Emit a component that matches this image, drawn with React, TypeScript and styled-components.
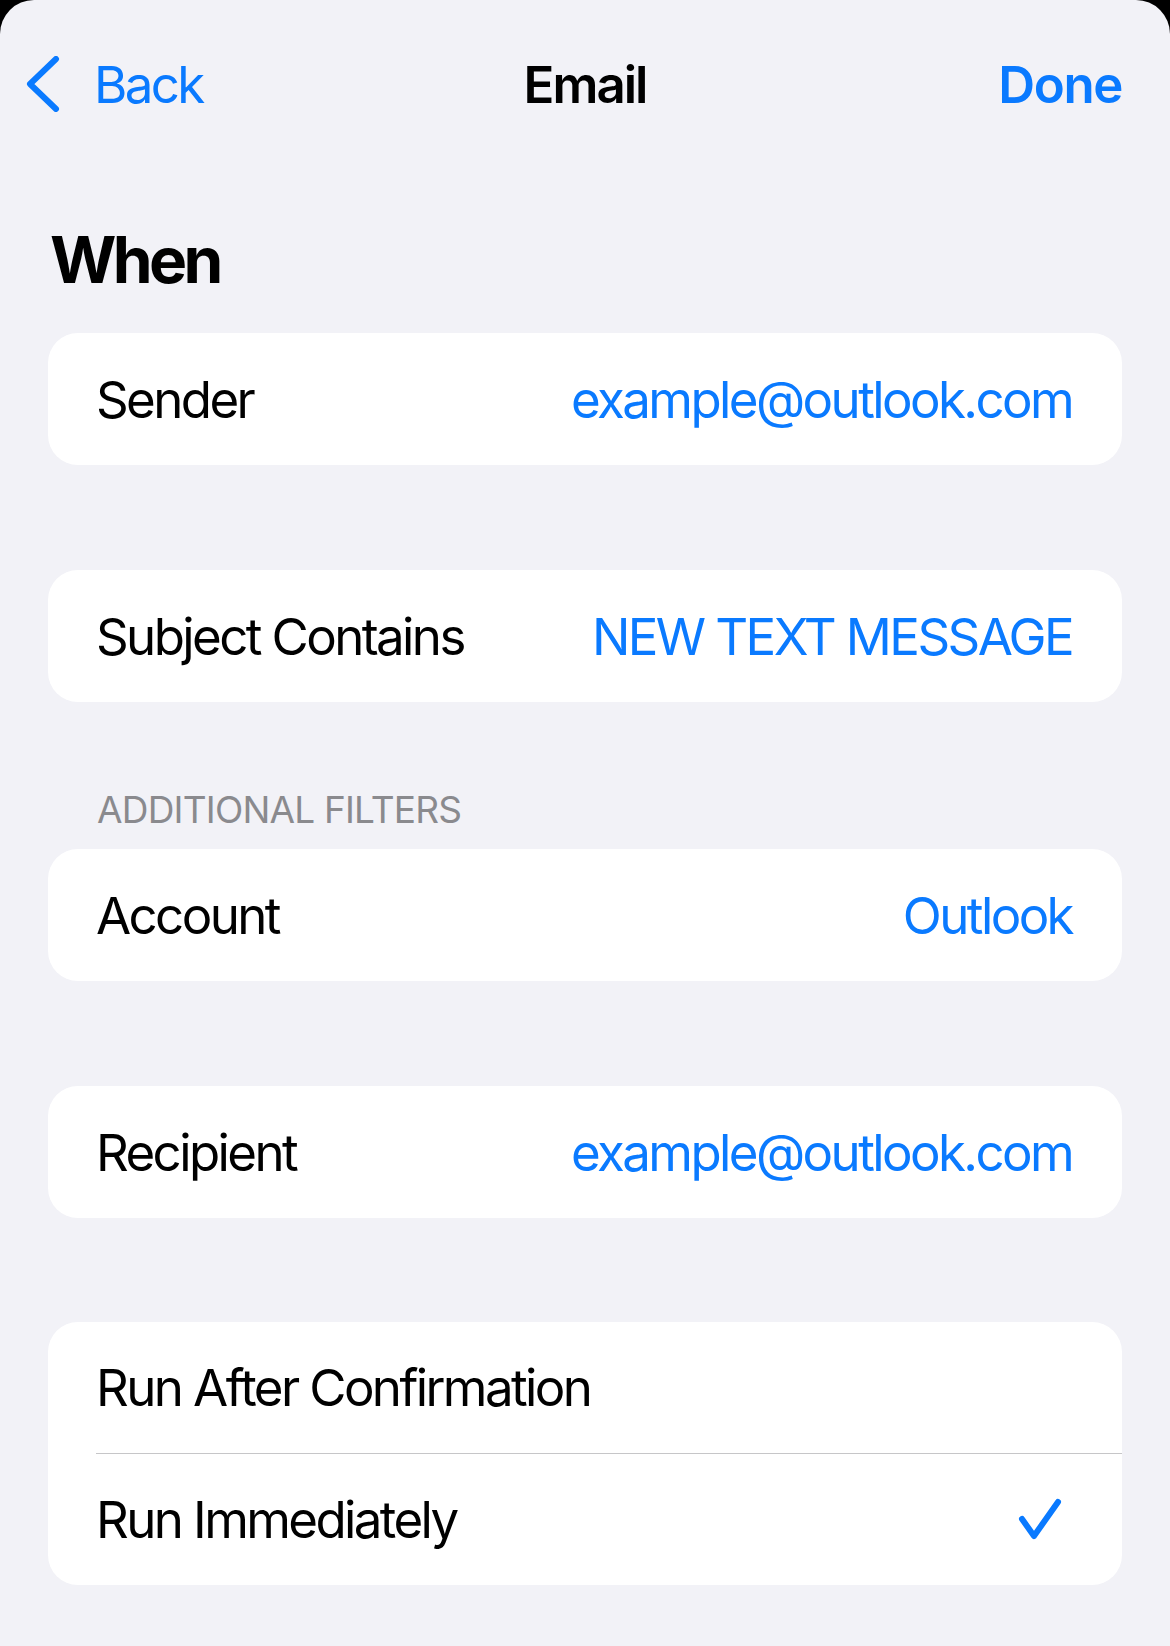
import React from "react";
import styled, { createGlobalStyle } from "styled-components";

const GlobalStyle = createGlobalStyle`
  html, body {
    margin: 0;
    padding: 0;
    background: #000;
  }
  body {
    font-family: Inter, "Noto Sans", "Liberation Sans", sans-serif;
    -webkit-font-smoothing: antialiased;
  }
`;

const Sheet = styled.div`
  min-height: 1646px;
  background-color: #f2f2f7;
  border-radius: 34px 34px 0 0;
  box-sizing: border-box;
  padding-bottom: 40px;
`;

const NavBar = styled.header`
  display: grid;
  grid-template-columns: 1fr auto 1fr;
  align-items: center;
  height: 88px;
  padding: 40px 48px 0 48px;
`;

const BackButton = styled.button`
  display: flex;
  align-items: center;
  gap: 34px;
  justify-self: start;
  margin-left: -22px;
  background: none;
  border: none;
  padding: 0;
  color: #0a7aff;
  font: inherit;
  font-size: 51px;
  letter-spacing: -2.6px;
`;

const NavTitle = styled.h2`
  margin: 0;
  font-size: 51px;
  font-weight: 600;
  letter-spacing: -2px;
  color: #000;
`;

const DoneButton = styled.button`
  justify-self: end;
  background: none;
  border: none;
  padding: 0;
  color: #0a7aff;
  font: inherit;
  font-size: 51px;
  font-weight: 600;
  letter-spacing: -1.4px;
`;

const Content = styled.main`
  padding: 0 48px;
`;

const LargeTitle = styled.h1`
  margin: 92px 0 0 2px;
  font-size: 64px;
  font-weight: 700;
  line-height: 80px;
  letter-spacing: -3.6px;
  color: #000;
`;

const SectionHeader = styled.div`
  margin: 86px 0 0 49px;
  height: 61px;
  font-size: 37px;
  line-height: 44px;
  color: #8a8a8e;
  letter-spacing: -0.8px;
`;

const Card = styled.section<{ $gap: number }>`
  margin-top: ${({ $gap }) => $gap}px;
  background-color: #fff;
  border-radius: 30px;
  overflow: hidden;
`;

const Row = styled.div<{ $height?: number }>`
  display: flex;
  align-items: center;
  justify-content: space-between;
  height: ${({ $height = 132 }) => $height}px;
  padding: 0 50px 0 48px;
  font-size: 51px;
  letter-spacing: -2.6px;
`;

const Label = styled.span`
  color: #000;
`;

const Value = styled.span`
  color: #0a7aff;
`;

const Divider = styled.hr`
  margin: 0 0 0 48px;
  border: none;
  height: 1px;
  background-color: #c6c6c8;
`;

const CheckIcon = styled.svg`
  margin-right: 8px;
`;

const Chevron = () => (
  <svg width="34" height="56" viewBox="0 0 34 56">
    <path d="M30 3 L4 28 L30 53" fill="none" stroke="#0a7aff" strokeWidth="6" strokeLinecap="round" strokeLinejoin="round" />
  </svg>
);

const Check = () => (
  <CheckIcon width="48" height="46" viewBox="0 0 48 46">
    <path d="M6 22 L18 39 L42 5" fill="none" stroke="#0a7aff" strokeWidth="6" strokeLinecap="round" strokeLinejoin="round" />
  </CheckIcon>
);

const App: React.FC = () => {
  return (
    <>
      <GlobalStyle />
      <Sheet>
        <NavBar>
          <BackButton>
            <Chevron />
            Back
          </BackButton>
          <NavTitle>Email</NavTitle>
          <DoneButton>Done</DoneButton>
        </NavBar>
        <Content>
          <LargeTitle>When</LargeTitle>
          <Card $gap={33}>
            <Row>
              <Label>Sender</Label>
              <Value>example@outlook.com</Value>
            </Row>
          </Card>
          <Card $gap={105}>
            <Row>
              <Label>Subject Contains</Label>
              <Value>NEW TEXT MESSAGE</Value>
            </Row>
          </Card>
          <SectionHeader>ADDITIONAL FILTERS</SectionHeader>
          <Card $gap={0}>
            <Row>
              <Label>Account</Label>
              <Value>Outlook</Value>
            </Row>
          </Card>
          <Card $gap={105}>
            <Row>
              <Label>Recipient</Label>
              <Value>example@outlook.com</Value>
            </Row>
          </Card>
          <Card $gap={104}>
            <Row $height={131}>
              <Label>Run After Confirmation</Label>
            </Row>
            <Divider />
            <Row $height={131}>
              <Label>Run Immediately</Label>
              <Check />
            </Row>
          </Card>
        </Content>
      </Sheet>
    </>
  );
};

export default App;
